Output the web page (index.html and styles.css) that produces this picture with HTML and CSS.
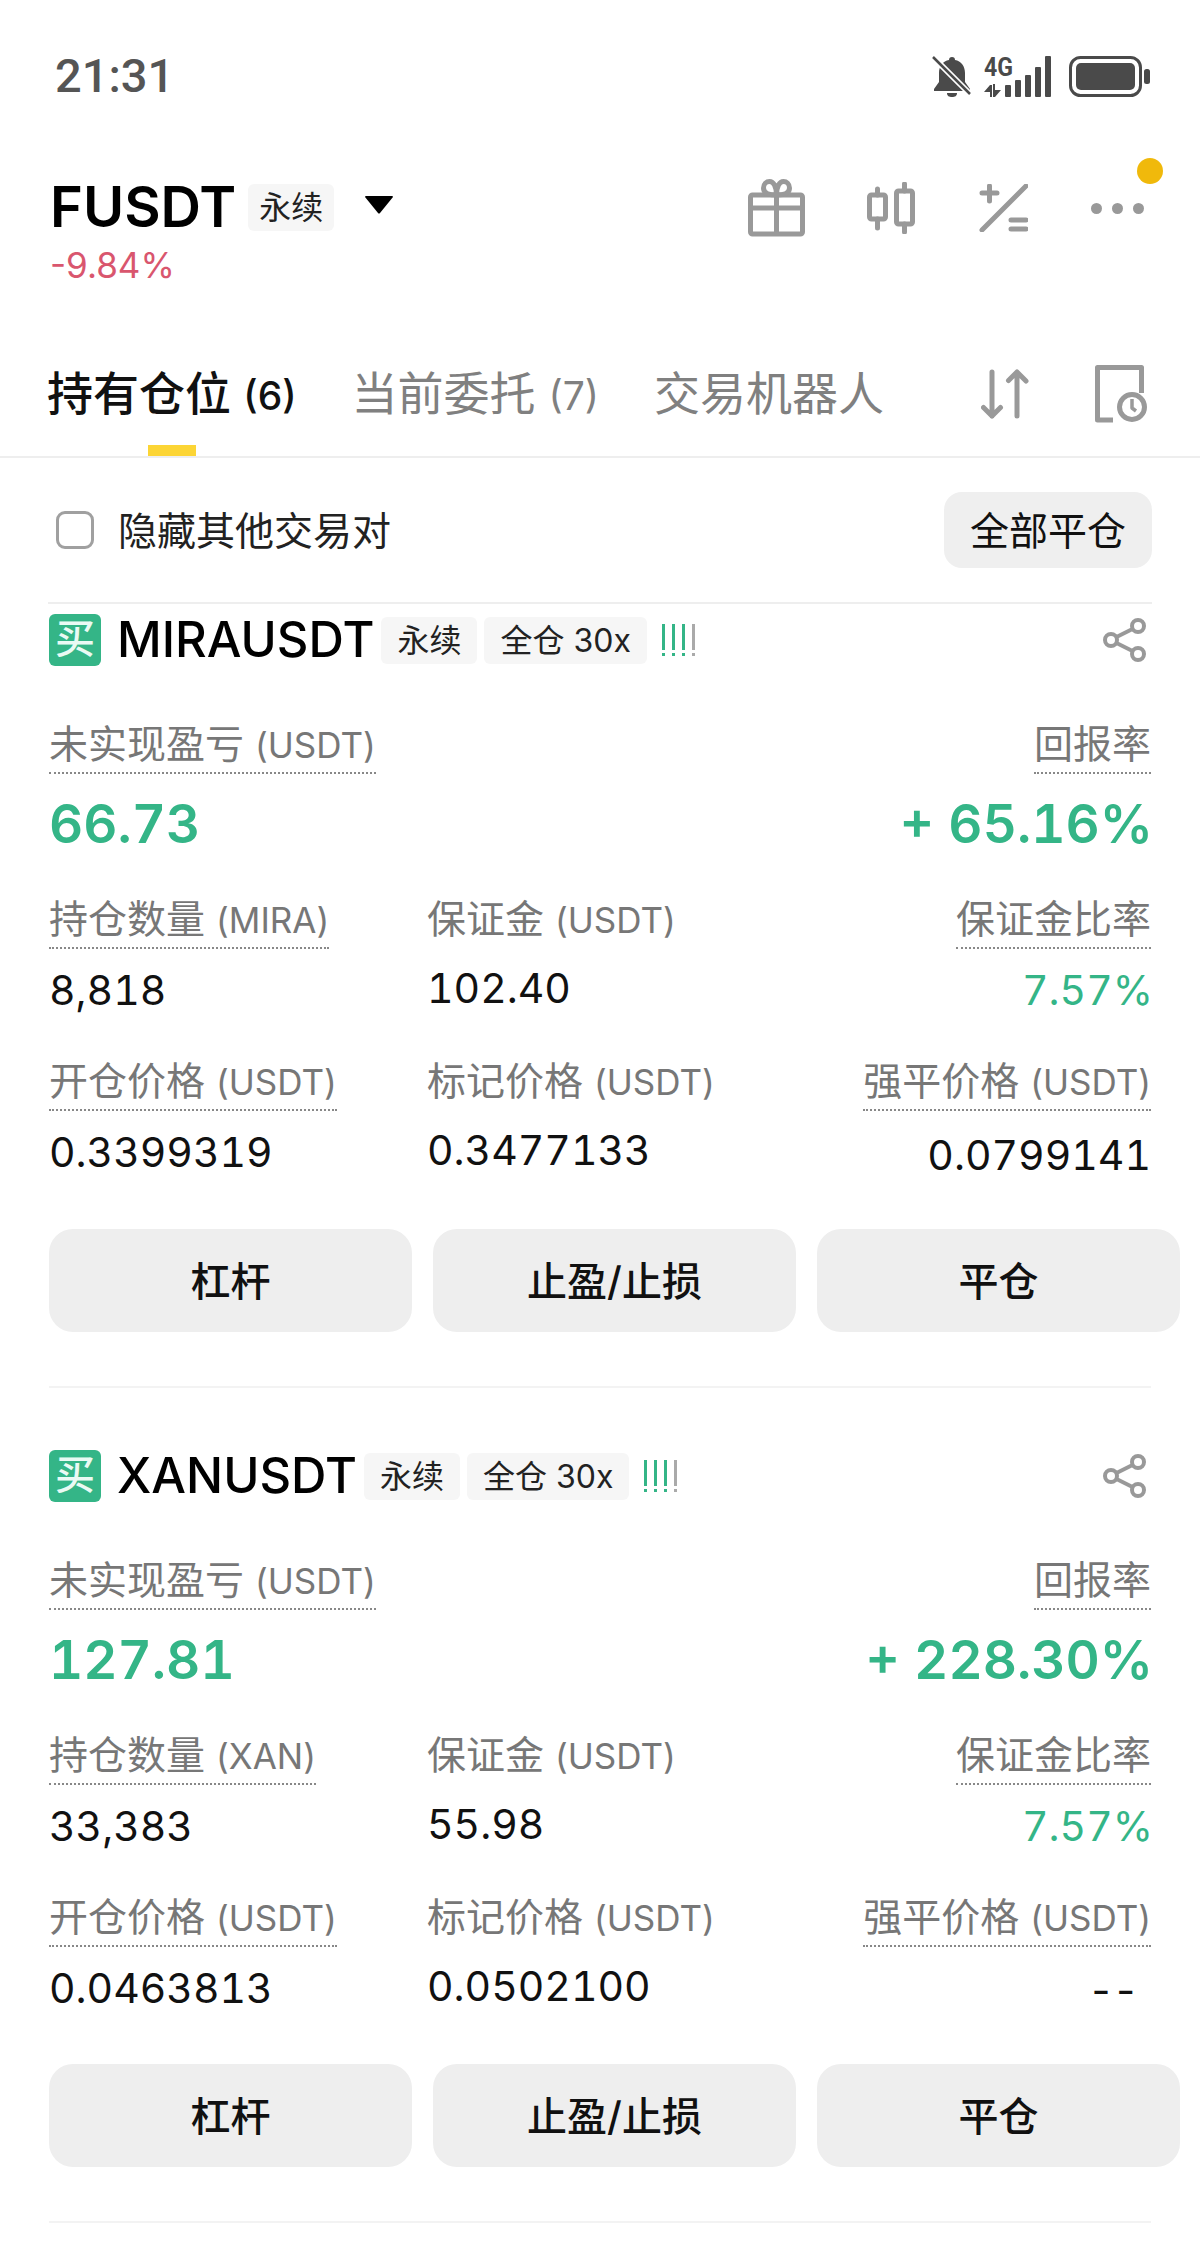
FILE: index.html
```html
<!DOCTYPE html>
<html lang="zh-CN">
	<head>
		<meta charset="UTF-8" />
		<meta name="viewport" content="width=device-width, initial-scale=1.0" />
		<title>FUSDT 持有仓位</title>
		<link rel="stylesheet" href="styles.css">
	</head>
	<body>
		<div class="status">
			<span class="clock">21:31</span>
			<div class="status-icons">
				<svg class="ic-bell" width="40" height="42" viewBox="0 0 40 42">
					<path d="M20 1c2 0 3 1 3 3 6 1 10 6 10 13v9l5 7v2H2v-2l5-7v-9C7 10 11 5 17 4c0-2 1-3 3-3z" fill="#4a4a4a"/>
					<path d="M15 37h10c0 3-2 4-5 4s-5-1-5-4z" fill="#4a4a4a"/>
					<path d="M2 2l35 35" stroke="#fff" stroke-width="6"/>
					<path d="M1 1l37 37" stroke="#4a4a4a" stroke-width="2.5"/>
				</svg>
				<svg class="ic-net" width="68" height="50" viewBox="0 -8 68 50">
					<text class="net-text" x="0" y="20" textLength="29" lengthAdjust="spacingAndGlyphs">4G</text>
					<path d="M6 29l-6 7h6v5h2V29zM11 41l6-7h-6v-6H9v13z" fill="#4a4a4a"/>
					<g fill="#4a4a4a">
						<rect x="21" y="29" width="6" height="12" rx="1"/>
						<rect x="31" y="24" width="6" height="17" rx="1"/>
						<rect x="41" y="19" width="6" height="22" rx="1"/>
						<rect x="51" y="11" width="6" height="30" rx="1"/>
						<rect x="61" y="0" width="6" height="41" rx="1"/>
					</g>
				</svg>
				<svg class="ic-batt" width="81" height="42" viewBox="0 0 81 42">
					<rect x="1.5" y="1.5" width="70" height="38" rx="10" fill="none" stroke="#4a4a4a" stroke-width="3"/>
					<rect x="7" y="7" width="59" height="27" rx="5" fill="#4a4a4a"/>
					<rect x="75" y="13" width="6" height="15" rx="2.5" fill="#4a4a4a"/>
				</svg>
			</div>
		</div>

		<div class="head">
			<div>
				<div class="pair">
					<span class="pair-name">FUSDT</span>
					<span class="tag tag-big">永续</span>
					<svg class="caret" width="28" height="18" viewBox="0 0 28 18"><path d="M1 0h26c1 0 1 1 1 1L15 17c-.5.7-1.500.7-2 0L0 1s0-1 1-1z" fill="#000"/></svg>
				</div>
				<div class="change">-9.84%</div>
			</div>
			<div class="head-icons">
				<svg width="57" height="58" viewBox="0 0 57 58" fill="none" stroke="#999" stroke-width="5">
					<rect x="2.500" y="16" width="52" height="39" rx="2"/>
					<path d="M2.500 29h52M28.500 16v39"/>
					<path d="M28.500 16c-8 0-13-2-13-7 0-4 3-6.500 6-6.500 4 0 7 5 7 13.500zM28.500 16c8 0 13-2 13-7 0-4-3-6.500-6-6.500-4 0-7 5-7 13.500z"/>
				</svg>
				<svg width="48" height="52" viewBox="0 0 48 52" fill="none" stroke="#999" stroke-width="5" stroke-linecap="round">
					<rect x="2.500" y="13" width="16" height="24" rx="2"/>
					<rect x="29.500" y="9" width="16" height="33" rx="2"/>
					<path d="M10.500 7v6M10.500 37v9M37.500 2v7M37.500 42v8"/>
				</svg>
				<svg class="ic-calc" width="49" height="48" viewBox="0 0 49 48" fill="none" stroke="#999" stroke-width="5" stroke-linecap="round">
					<path d="M3 9h15M10.500 2v15M47 2L3 46M32 36h15M32 45h15"/>
				</svg>
				<div class="more">
					<i class="more-dot"></i><i class="more-dot"></i><i class="more-dot"></i>
					<span class="badge-dot"></span>
				</div>
			</div>
		</div>

		<div class="tabs">
			<div class="tab active">持有仓位 <span class="tab-num">(6)</span></div>
			<div class="tab">当前委托 <span class="tab-num">(7)</span></div>
			<div class="tab">交易机器人</div>
			<div class="tab-icons">
				<svg width="48" height="50" viewBox="0 0 48 50" fill="none" stroke="#999" stroke-width="5" stroke-linecap="round" stroke-linejoin="round">
					<path d="M11 3v44M2.500 38.500L11 47l8.500-8.500M36 47V3M27.500 11.500L36 3l9 9"/>
				</svg>
				<svg width="52" height="58" viewBox="0 0 52 58" fill="none" stroke="#999" stroke-width="5" stroke-linejoin="round">
					<path d="M18 55H2.500V2.500h44V28"/>
					<circle cx="37" cy="42" r="12.500"/>
					<path d="M37 34v9l4 3" stroke-width="3.500"/>
				</svg>
			</div>
		</div>

		<div class="filter">
			<label class="check"><span class="check-box"></span><span class="check-text">隐藏其他交易对</span></label>
			<button class="btn-all">全部平仓</button>
		</div>

		<div class="card">
			<div class="card-head">
				<span class="buy">买</span>
				<span class="symbol">MIRAUSDT</span>
				<span class="tag">永续</span>
				<span class="tag">全仓 30x</span>
				<span class="risk"><i></i><i></i><i></i><i class="off"></i></span>
				<svg class="share" width="44" height="44" viewBox="0 0 44 44" fill="none" stroke="#999" stroke-width="4">
					<circle cx="8" cy="22" r="6"/><circle cx="35" cy="8" r="6"/><circle cx="35" cy="36" r="6"/>
					<path d="M13.500 19L29.500 11M13.500 25L29.500 33"/>
				</svg>
			</div>
			<div class="pnl">
				<div>
					<span class="label">未实现盈亏<span class="unit">(USDT)</span></span>
					<div class="pnl-num">66.73</div>
				</div>
				<div class="right">
					<span class="label">回报率</span>
					<div class="pnl-num">+ 65.16%</div>
				</div>
			</div>
			<div class="row">
				<div class="cell">
					<span class="label">持仓数量<span class="unit">(MIRA)</span></span>
					<div class="val">8,818</div>
				</div>
				<div class="cell">
					<span class="label plain">保证金<span class="unit">(USDT)</span></span>
					<div class="val val-up">102.40</div>
				</div>
				<div class="cell right">
					<span class="label">保证金比率</span>
					<div class="val val-green">7.57%</div>
				</div>
			</div>
			<div class="row">
				<div class="cell">
					<span class="label">开仓价格<span class="unit">(USDT)</span></span>
					<div class="val">0.3399319</div>
				</div>
				<div class="cell">
					<span class="label plain">标记价格<span class="unit">(USDT)</span></span>
					<div class="val val-up">0.3477133</div>
				</div>
				<div class="cell right">
					<span class="label">强平价格<span class="unit">(USDT)</span></span>
					<div class="val val-low">0.0799141</div>
				</div>
			</div>
			<div class="actions">
				<button>杠杆</button>
				<button>止盈/止损</button>
				<button>平仓</button>
			</div>
		</div>

		<div class="card">
			<div class="card-head">
				<span class="buy">买</span>
				<span class="symbol">XANUSDT</span>
				<span class="tag">永续</span>
				<span class="tag">全仓 30x</span>
				<span class="risk"><i></i><i></i><i></i><i class="off"></i></span>
				<svg class="share" width="44" height="44" viewBox="0 0 44 44" fill="none" stroke="#999" stroke-width="4">
					<circle cx="8" cy="22" r="6"/><circle cx="35" cy="8" r="6"/><circle cx="35" cy="36" r="6"/>
					<path d="M13.500 19L29.500 11M13.500 25L29.500 33"/>
				</svg>
			</div>
			<div class="pnl">
				<div>
					<span class="label">未实现盈亏<span class="unit">(USDT)</span></span>
					<div class="pnl-num">127.81</div>
				</div>
				<div class="right">
					<span class="label">回报率</span>
					<div class="pnl-num">+ 228.30%</div>
				</div>
			</div>
			<div class="row">
				<div class="cell">
					<span class="label">持仓数量<span class="unit">(XAN)</span></span>
					<div class="val">33,383</div>
				</div>
				<div class="cell">
					<span class="label plain">保证金<span class="unit">(USDT)</span></span>
					<div class="val val-up">55.98</div>
				</div>
				<div class="cell right">
					<span class="label">保证金比率</span>
					<div class="val val-green">7.57%</div>
				</div>
			</div>
			<div class="row">
				<div class="cell">
					<span class="label">开仓价格<span class="unit">(USDT)</span></span>
					<div class="val">0.0463813</div>
				</div>
				<div class="cell">
					<span class="label plain">标记价格<span class="unit">(USDT)</span></span>
					<div class="val val-up">0.0502100</div>
				</div>
				<div class="cell right">
					<span class="label">强平价格<span class="unit">(USDT)</span></span>
					<div class="val val-none">--</div>
				</div>
			</div>
			<div class="actions">
				<button>杠杆</button>
				<button>止盈/止损</button>
				<button>平仓</button>
			</div>
		</div>
	</body>
</html>
```

FILE: styles.css
```css
body {
	margin: 0;
	width: 1200px;
	height: 2254px;
	overflow: hidden;
	background-color: #fff;
	color: #111;
	font-family: Inter, "Noto Sans CJK SC", sans-serif;
}
button {
	font-family: Inter, "Noto Sans CJK SC", sans-serif;
	border: 0;
	color: #111;
}
svg {
	display: block;
}

.status {
	display: flex;
	justify-content: space-between;
	height: 150px;
	padding: 52px 50px 0 55px;
	box-sizing: border-box;
}
.clock {
	font-family: Roboto, sans-serif;
	font-size: 47px;
	font-weight: 500;
	line-height: 48px;
	color: #555;
}
.status-icons {
	display: flex;
	gap: 12px;
	margin-top: 4px;
}
.ic-net {
	margin-top: -8px;
}
.ic-batt {
	margin-left: 5px;
}
.net-text {
	font-family: Roboto, sans-serif;
	font-size: 25px;
	font-weight: 700;
	fill: #4a4a4a;
}

.head {
	display: flex;
	justify-content: space-between;
	height: 210px;
	padding: 27px 56px 0 50px;
	box-sizing: border-box;
}
.pair {
	display: flex;
	align-items: center;
	height: 60px;
}
.pair-name {
	font-size: 56px;
	font-weight: 600;
	line-height: 60px;
	color: #000;
}
.tag {
	background-color: #f6f6f6;
	border-radius: 6px;
	padding: 0 16px;
	height: 47px;
	font-size: 32px;
	line-height: 47px;
	color: #222;
	white-space: nowrap;
}
.tag-big {
	margin-left: 12px;
	padding: 0 11px;
}
.caret {
	margin-left: 31px;
	margin-top: -4px;
}
.change {
	margin-top: 8px;
	font-size: 35px;
	line-height: 40px;
	color: #d9566e;
}
.head-icons {
	display: flex;
	align-items: center;
	gap: 62px;
	height: 58px;
	margin-top: 2px;
}
.ic-calc {
	margin-left: 2px;
}
.more {
	position: relative;
	display: flex;
	gap: 10px;
	margin-left: 1px;
}
.more-dot {
	width: 11px;
	height: 11px;
	border-radius: 50%;
	background-color: #999;
}
.badge-dot {
	position: absolute;
	left: 46px;
	top: -45px;
	width: 26px;
	height: 26px;
	border-radius: 50%;
	background-color: #f0b90b;
}

.tabs {
	display: flex;
	gap: 55px;
	height: 98px;
	padding: 0 53px 0 47px;
	box-sizing: border-box;
	border-bottom: 2px solid #eee;
}
.tab {
	position: relative;
	font-size: 46px;
	line-height: 66px;
	color: #808080;
	white-space: nowrap;
}
.tab.active {
	font-weight: 500;
	color: #111;
}
.tab.active::after {
	content: "";
	position: absolute;
	left: 101px;
	top: 85px;
	width: 48px;
	height: 11px;
	background-color: #fcd535;
}
.tab-num {
	font-size: 39px;
}
.tab-icons {
	display: flex;
	gap: 66px;
	margin-left: auto;
	margin-top: 5px;
}
.tab-icons svg:first-child {
	margin-top: 4px;
}

.filter {
	display: flex;
	align-items: center;
	justify-content: space-between;
	height: 144px;
	margin: 0 48px;
	border-bottom: 2px solid #eee;
}
.check {
	display: flex;
	align-items: center;
	gap: 24px;
	margin-left: 8px;
	font-size: 39px;
	color: #222;
}
.check-box {
	width: 38px;
	height: 38px;
	border: 3px solid #a0a0a0;
	border-radius: 9px;
	box-sizing: border-box;
}
.check-text {
	margin-bottom: 4px;
}
.btn-all {
	width: 208px;
	height: 76px;
	padding: 0 0 4px;
	border-radius: 18px;
	background-color: #efefef;
	font-size: 39px;
}

.card {
	margin: 0 49px;
	padding-top: 10px;
	padding-bottom: 54px;
	border-bottom: 2px solid #f3f3f3;
}
.card + .card {
	padding-top: 62px;
}
.card-head {
	display: flex;
	align-items: center;
	height: 52px;
}
.buy {
	width: 52px;
	height: 52px;
	border-radius: 6px;
	background-color: #34b587;
	color: #eafaf4;
	font-size: 40px;
	font-weight: 500;
	line-height: 50px;
	text-align: center;
	margin-right: 16px;
}
.symbol {
	font-size: 49px;
	font-weight: 500;
	line-height: 52px;
	color: #000;
	margin-right: 7px;
}
.card-head .tag {
	margin-right: 7px;
}
.risk {
	display: flex;
	gap: 7px;
	margin-left: 8px;
}
.risk i {
	width: 3px;
	height: 32px;
	background: linear-gradient(#34b587 0 26px, transparent 26px 29px, #34b587 29px);
}
.risk i.off {
	background: linear-gradient(#aaa 0 26px, transparent 26px 29px, #aaa 29px);
}
.share {
	margin-left: auto;
	margin-right: 4px;
}

.label {
	display: block;
	width: fit-content;
	padding-bottom: 6px;
	border-bottom: 2px dotted #888;
	font-size: 39px;
	line-height: 44px;
	color: #777;
	white-space: nowrap;
}
.label.plain {
	border-bottom-color: transparent;
}
.unit {
	margin-left: 11px;
	font-size: 35px;
	line-height: 1;
}
.pnl {
	display: flex;
	justify-content: space-between;
	margin-top: 56px;
}
.right {
	display: flex;
	flex-direction: column;
	align-items: flex-end;
}
.pnl-num {
	margin-top: 22px;
	margin-right: -2px;
	font-size: 53px;
	font-weight: 600;
	line-height: 57px;
	font-variant-numeric: tabular-nums;
	color: #34b587;
}
.row {
	display: grid;
	grid-template-columns: 378px 1fr 1fr;
	margin-top: 44px;
}
.val {
	margin-top: 16px;
	font-size: 41px;
	line-height: 50px;
	font-variant-numeric: tabular-nums;
	color: #111;
}
.val-up {
	margin-top: 14px;
}
.val-green {
	margin-right: -2px;
	color: #34b587;
}
.val-low {
	margin-top: 19px;
}
.val-none {
	margin-top: 18px;
	margin-right: 14px;
	letter-spacing: -2px;
}
.actions {
	display: flex;
	gap: 21px;
	width: 1131px;
	margin-top: 49px;
}
.actions button {
	flex: 1;
	height: 103px;
	padding: 0 0 4px;
	border-radius: 24px;
	background-color: #eee;
	font-size: 40px;
	font-weight: 500;
}
```
